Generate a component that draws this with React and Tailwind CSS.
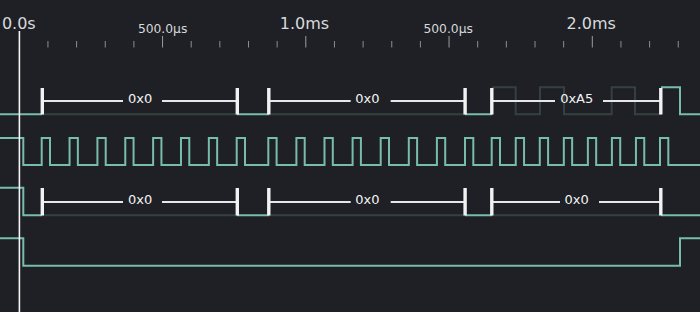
import React from "react";

const TEAL = "#78bcad";
const DIM = "#34413f";
const FONT = "'DejaVu Sans', 'Liberation Sans', sans-serif";

function lin(a, b, n) {
  const out = [];
  for (let i = 0; i < n; i++) out.push(a + ((b - a) * i) / (n - 1));
  return out;
}

const bytes = [
  { x0: 42.2, x1: 237.2, edges: lin(41.7, 236.7, 8) },
  { x0: 268.7, x1: 465, edges: lin(268.3, 465, 8) },
  { x0: 491.7, x1: 660.7, edges: lin(491.7, 660, 8) },
];

function clockPath() {
  const hi = 138, lo = 165, w = 8.3;
  let d = `M0,${hi} L23.3,${hi} L23.3,${lo}`;
  bytes.forEach((b) => {
    b.edges.forEach((r) => {
      d += ` L${r},${lo} L${r},${hi} L${r + w},${hi} L${r + w},${lo}`;
    });
  });
  d += ` L700,${lo}`;
  return d;
}

function Annotation({ b, y, hi, lo, label, gap }) {
  return (
    <g>
      <line x1={b.x0} y1={y} x2={gap[0]} y2={y} stroke="#e6e6e6" strokeWidth="2" />
      <line x1={gap[1]} y1={y} x2={b.x1} y2={y} stroke="#e6e6e6" strokeWidth="2" />
      <rect x={b.x0 - 1.6} y={hi} width="3.4" height={lo - hi} fill="#f2f2f2" />
      <rect x={b.x1 - 1.6} y={hi} width="3.4" height={lo - hi} fill="#f2f2f2" />
      <text
        x={(b.x0 + b.x1) / 2 + 0.5}
        y={y + 2}
        textAnchor="middle"
        fontSize="13"
        fill="#f4f4f4"
        style={{ fontFamily: FONT }}
      >
        {label}
      </text>
    </g>
  );
}

function Ruler() {
  const ticks = [];
  for (let k = 1; k <= 24; k++) {
    const x = 19.3 + k * 28.65;
    if (x > 700) break;
    const major = k % 5 === 0;
    ticks.push(
      <line
        key={k}
        x1={x}
        x2={x}
        y1={major ? 36 : 41}
        y2={47.5}
        stroke={major ? "#9a9da2" : "#8a8d92"}
        strokeWidth="1"
      />
    );
  }
  const big = { fontSize: 16, fill: "#d9dadc", style: { fontFamily: FONT } };
  const small = { fontSize: 12.3, fill: "#d9dadc", style: { fontFamily: FONT } };
  return (
    <svg width="700" height="48" viewBox="0 0 700 48" className="block">
      {ticks}
      <text x="18.8" y="28.5" textAnchor="middle" {...big}>0.0s</text>
      <text x="162.6" y="33.2" textAnchor="middle" {...small}>500.0µs</text>
      <text x="304.5" y="28.5" textAnchor="middle" {...big}>1.0ms</text>
      <text x="448.2" y="33.2" textAnchor="middle" {...small}>500.0µs</text>
      <text x="591.2" y="28.5" textAnchor="middle" {...big}>2.0ms</text>
      <line x1="19.4" x2="19.4" y1="31" y2="48" stroke="#f5f5f5" strokeWidth="1.6" />
    </svg>
  );
}

function Traces() {
  const [b1, b2, b3] = bytes;
  return (
    <svg width="700" height="264" viewBox="0 48 700 264" className="block">
      {/* dim signals under annotations */}
      <g fill="none" stroke={DIM} strokeWidth="2">
        <path d={`M${b1.x0},114.3 L${b1.x1},114.3 M${b2.x0},114.3 L${b2.x1},114.3`} />
        <path d="M492,87.3 L515.7,87.3 L515.7,114.3 L540,114.3 L540,87.3 L564,87.3 L564,114.3 L611.7,114.3 L611.7,87.3 L635,87.3 L635,114.3 L661,114.3" />
        <path d={`M${b1.x0},215.3 L${b1.x1},215.3 M${b2.x0},215.3 L${b2.x1},215.3 M${b3.x0},215.3 L${b3.x1},215.3`} />
      </g>

      {/* bright signals */}
      <g fill="none" stroke={TEAL} strokeWidth="2" strokeLinejoin="miter">
        <path d="M0,114.3 L42,114.3 M237,114.3 L269,114.3 M465,114.3 L492,114.3 M661,87.3 L680,87.3 L680,114.3 L700,114.3" />
        <path d={clockPath()} />
        <path d="M0,187.8 L23.3,187.8 L23.3,215.3 L42,215.3 M237,215.3 L269,215.3 M465,215.3 L492,215.3 M661,215.3 L700,215.3" />
        <path d="M0,238.3 L23.3,238.3 L23.3,265.8 L680,265.8 L680,238.3 L700,238.3" />
      </g>

      {/* annotations */}
      <Annotation b={b1} y={101} hi={88} lo={114.5} label="0x0" gap={[123, 162]} />
      <Annotation b={b2} y={101} hi={88} lo={114.5} label="0x0" gap={[350.7, 390.7]} />
      <Annotation b={b3} y={101} hi={88} lo={114.5} label="0xA5" gap={[555, 603]} />
      <Annotation b={b1} y={202} hi={188} lo={215.5} label="0x0" gap={[123, 162]} />
      <Annotation b={b2} y={202} hi={188} lo={215.5} label="0x0" gap={[350.7, 390.7]} />
      <Annotation b={b3} y={202} hi={188} lo={215.5} label="0x0" gap={[560, 599]} />

      {/* cursor */}
      <line x1="19.4" x2="19.4" y1="48" y2="312" stroke="#f5f5f5" strokeWidth="1.6" />
    </svg>
  );
}

export default function App() {
  return (
    <div className="w-[700px] h-[312px] bg-[#1e2025] flex flex-col overflow-hidden">
      <div className="h-[48px] shrink-0">
        <Ruler />
      </div>
      <div className="flex-1">
        <Traces />
      </div>
    </div>
  );
}
